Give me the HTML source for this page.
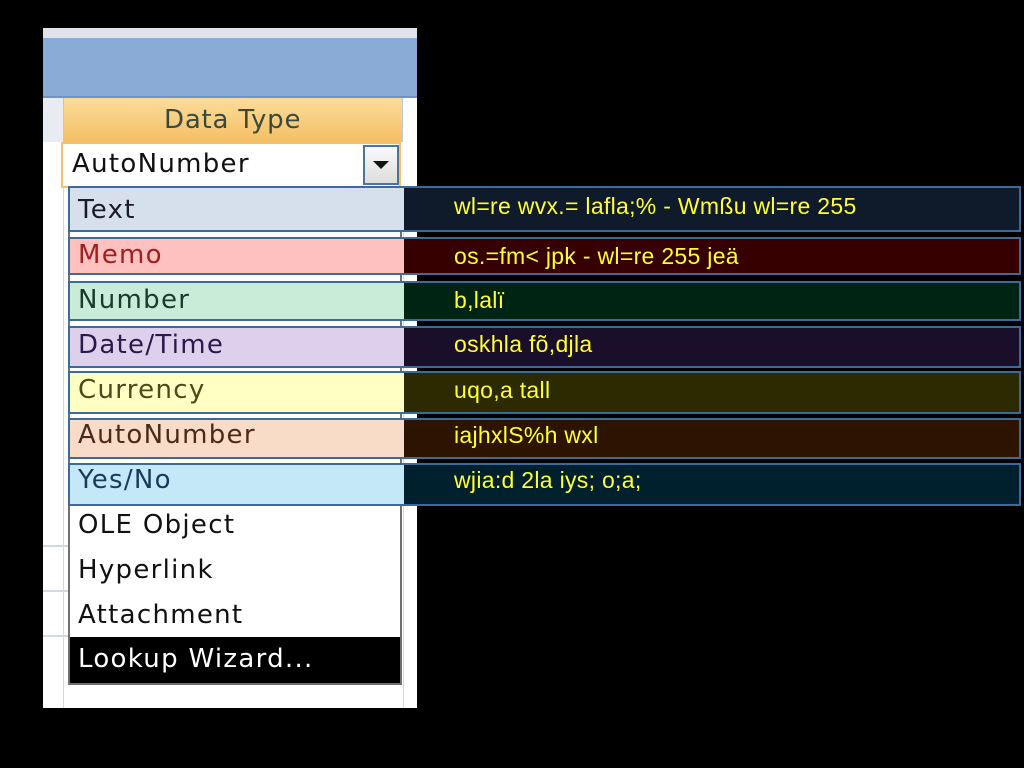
<!DOCTYPE html>
<html><head><style>
body{margin:0;width:1024px;height:768px;background:#000;position:relative;overflow:hidden;font-family:"Liberation Sans",sans-serif}
.a{position:absolute}
.lt{font-family:"DejaVu Sans",sans-serif;font-size:26px;color:#1a1a2a;left:78px;letter-spacing:1.3px}
.rt{color:#ffff33;font-size:23px;left:454px;letter-spacing:0.3px}
.band{position:absolute;left:68px;width:953px;border:2px solid #3d6a96;box-sizing:border-box}
</style></head><body>
<div class="a" style="left:43px;top:28px;width:374px;height:680px;background:#fff"></div>
<div class="a" style="left:43px;top:28px;width:374px;height:10px;background:#e0e4ea"></div>
<div class="a" style="left:43px;top:38px;width:374px;height:58px;background:#8aabd6"></div>
<div class="a" style="left:43px;top:96px;width:374px;height:2px;background:#6d94c4"></div>
<div class="a" style="left:43px;top:98px;width:20px;height:44px;background:#e8ecf2"></div>
<div class="a" style="left:63px;top:98px;width:340px;height:44px;background:linear-gradient(#fbdc9c,#f4bf64);border-left:1px solid #b9c8dc;border-right:1px solid #b9c8dc;box-sizing:border-box"></div>
<div class="a" style="left:164px;top:105px;font-family:'DejaVu Sans',sans-serif;font-size:26px;letter-spacing:0.8px;color:#3a4a3a">Data Type</div>
<div class="a" style="left:61px;top:142px;width:340px;height:46px;background:#fff;border:2px solid #f5c06a;box-sizing:border-box"></div>
<div class="a" style="left:72px;top:149px;font-family:'DejaVu Sans',sans-serif;font-size:26px;letter-spacing:1.3px;color:#111">AutoNumber</div>
<div class="a" style="left:363px;top:145px;width:36px;height:40px;border:2px solid #4a73a0;background:linear-gradient(#fafafa,#ddd);box-sizing:border-box"></div>
<div class="a" style="left:373px;top:161px;width:0;height:0;border-left:8px solid transparent;border-right:8px solid transparent;border-top:8px solid #111"></div>
<div class="a" style="left:63px;top:188px;width:1px;height:520px;background:#d0d8e4"></div>
<div class="a" style="left:403px;top:188px;width:1px;height:520px;background:#d0d8e4"></div>
<div class="a" style="left:43px;top:545px;width:25px;height:2px;background:#d0d8e4"></div>
<div class="a" style="left:43px;top:590px;width:25px;height:2px;background:#d0d8e4"></div>
<div class="a" style="left:43px;top:635px;width:25px;height:2px;background:#d0d8e4"></div>
<div class="a" style="left:68px;top:187px;width:334px;height:498px;border:2px solid #707070;box-sizing:border-box"></div>
<div class="a" style="left:70px;top:637px;width:330px;height:46px;background:#000"></div>

<div class="band" style="top:186px;height:46px;background:linear-gradient(90deg,#d6e0ec 334px,#0f1a2a 334px)"></div>
<div class="band" style="top:237px;height:38px;background:linear-gradient(90deg,#ffc0c0 334px,#360000 334px)"></div>
<div class="band" style="top:281px;height:40px;background:linear-gradient(90deg,#c8ecd8 334px,#002414 334px)"></div>
<div class="band" style="top:326px;height:42px;background:linear-gradient(90deg,#ddd0ec 334px,#1a0f2a 334px)"></div>
<div class="band" style="top:371px;height:43px;background:linear-gradient(90deg,#ffffc4 334px,#2c2a00 334px)"></div>
<div class="band" style="top:418px;height:41px;background:linear-gradient(90deg,#f8dcc8 334px,#2c1400 334px)"></div>
<div class="band" style="top:463px;height:43px;background:linear-gradient(90deg,#c4e8f8 334px,#00202e 334px)"></div>

<div class="a lt" style="top:195px">Text</div>
<div class="a lt" style="top:240px;color:#a02020">Memo</div>
<div class="a lt" style="top:285px;color:#1a3a2a">Number</div>
<div class="a lt" style="top:330px;color:#2a1a4a">Date/Time</div>
<div class="a lt" style="top:375px;color:#4a4a1a">Currency</div>
<div class="a lt" style="top:420px;color:#4a2a1a">AutoNumber</div>
<div class="a lt" style="top:465px;color:#1a3a5a">Yes/No</div>
<div class="a lt" style="top:510px;color:#111">OLE Object</div>
<div class="a lt" style="top:555px;color:#111">Hyperlink</div>
<div class="a lt" style="top:600px;color:#111">Attachment</div>
<div class="a lt" style="top:644px;color:#fff">Lookup Wizard...</div>

<div class="a rt" style="top:193px">wl=re wvx.= lafla;% - Wmßu wl=re 255</div>
<div class="a rt" style="top:243px">os.=fm&lt; jpk - wl=re 255 jeä</div>
<div class="a rt" style="top:287px">b,lalï</div>
<div class="a rt" style="top:331px">oskhla fõ,djla</div>
<div class="a rt" style="top:377px">uqo,a tall</div>
<div class="a rt" style="top:422px">iajhxlS%h wxl</div>
<div class="a rt" style="top:467px">wjia:d 2la iys; o;a;</div>
</body></html>
